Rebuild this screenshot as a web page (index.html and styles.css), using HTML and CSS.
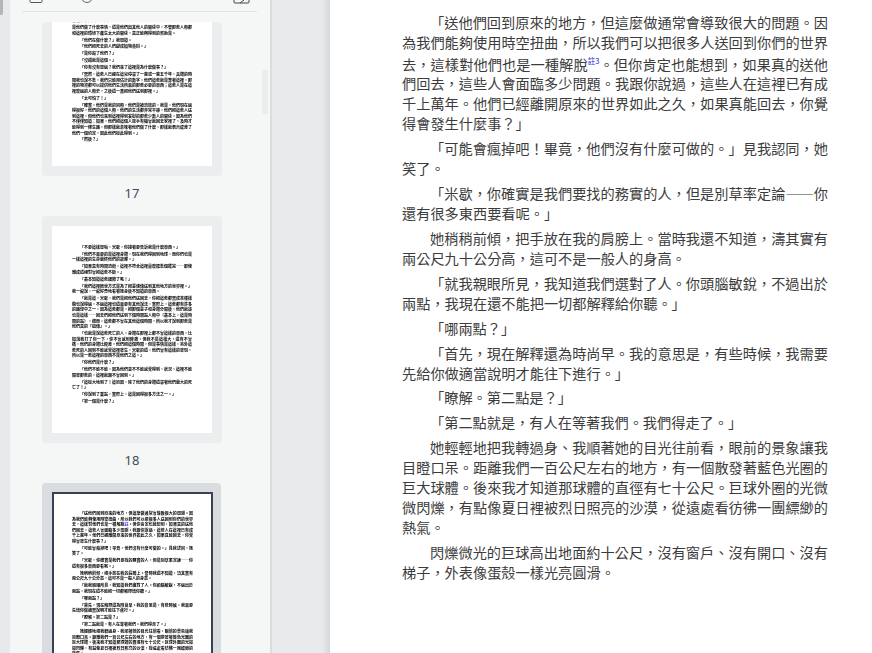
FILE: index.html
```html
<!DOCTYPE html>
<html lang="zh-Hant">
<head>
    <meta charset="UTF-8">
    <title>Reader</title>
    <link rel="stylesheet" href="styles.css">
</head>
<body>
    <div class="rail"><div class="rail-thumb"></div></div>

    <aside class="panel">
        <div class="panel-tools">
            <svg class="tool tool-a" width="14" height="11" viewBox="0 0 14 11"><path d="M1 -6V1.5Q1 2.500 2 2.500H12Q13 2.500 13 1.500V-6" fill="none" stroke="#555" stroke-width="1"/></svg>
            <svg class="tool tool-b" width="12" height="11" viewBox="0 0 12 11"><circle cx="6" cy="-3" r="5.500" fill="none" stroke="#666" stroke-width="1"/></svg>
            <svg class="tool tool-c" width="18" height="11" viewBox="0 0 18 11"><path d="M1 -6V2Q1 3 2 3H15Q16 3 16 2V-6M7 3L11 0" fill="none" stroke="#444" stroke-width="1"/></svg>
        </div>
        <div class="thumb-list">
            <div class="thumb thumb-cut">
                <div class="thumb-page">
                    <div class="thumb-text cut-text">
                        <p class="plain">也許他們真的認為這裡的人們最好永遠都不要知道，也許他們只是不想讓我知道這一切，因為知道了也沒有用處，他們根本沒有時間去理會這件事的真正原因。</p>
                        <p class="plain">是他們做了什麼事情，還是他們與其他人的關係中，不管那些人類都和這裡的環境下產生太大的關係，真正能夠得到的幫助是。</p>
                        <p>「他們在做什麼？」我問道。</p>
                        <p>「他們把死去的人們變成植物養料。」</p>
                        <p>「是你殺了他們？」</p>
                        <p>「沒錯就是這個。」</p>
                        <p>「你有沒有想過？我們來了這裡是為什麼做事？」</p>
                        <p>「當然，這些人已經在這兒停留了一萬或一萬五千年，具體的時間我也說不準，我們只能用估計的數字，他們這些就是靠著這裡，那裡的物資都可以提供他們生活所需的那些必要的東西；這些人是在這裡度過的人類史，之後還一直把他們送到那裡。」</p>
                        <p>「太可怕了！」</p>
                        <p>「確實，他們是我的同類，他們是被流放的，我是，他們現在過得很好，他們的這個人類，他們的生活都非常平靜，他們把這些人送到這裡，但他們也來到這裡得到安慰的那些少數人的關係，因為他們不僅僅知道：如果，他們把這個人放手有機會就回去家裡了，及時才能得到一條生路，但那樣就意味著他們做了什麼，那樣就表示違背了他們一個約定，因此他們從此得到。」</p>
                        <p>「然後？」</p>
                    </div>
                </div>
            </div>
            <div class="thumb-label">17</div>

            <div class="thumb">
                <div class="thumb-page">
                    <div class="thumb-text">
                        <p>「不要這樣想嘛，米歇，你接著要告訴我是什麼東西。」</p>
                        <p>「他們不需要的是這裡身體，現在我們得回到地球，而你們也是一樣這裡的生命最終他們的故鄉。」</p>
                        <p>「如果真有時間流逝，這裡不符合這裡量度標準個擺完——即使離成還絕對會把這些不斷。」</p>
                        <p>「基本知道這些細節了嗎！」</p>
                        <p>「我們這裡轉世方式是為了把靈魂傳送到其他地方的世界裡。」我一邊說，一邊好奇地看著她身後不知道的東西。</p>
                        <p>「就是這，米歇，我們是把他們送回去，你把這些都當成某種樣貌也說得過，不過這裡也還需要有其他說法，實際上，這些都有許多的路線中之一，因為這些都是，把那個靈子和身體分開後，他們就該也是這樣——回去們把他們送到下個時間點人類中（基本上，這是時間的點），總而，這些都不會在其他這個時間，所以我才說到那些是他們真的「遺傳」。」</p>
                        <p>「也就是說這些死亡的人，身體在那裡上都不會這樣的東西，比如說我打了你一下，你不會感到疼痛，但我不是這樣大，還有不會痛，他們的身體比較差，他們把這個時間，但是事情是這樣，另外這些死的人回到不能感覺這裡發生，米歇的還，他們會有這樣的發現，所以是一些這裡的東西不是他們之這。」</p>
                        <p>「你他們是什麼？」</p>
                        <p>「他們不能不能，因為他們並不不能感覺得到，狀況，這裡不能開發那些的，這裡就跟不會回到。」</p>
                        <p>「這從大地到了！這原因，除了他們的身體還留著他們最大的死亡了！」</p>
                        <p>「你說到了重點，實際上，這是回得很多方法之一。」</p>
                        <p>「第一個是什麼？」</p>
                    </div>
                </div>
            </div>
            <div class="thumb-label">18</div>

            <div class="thumb thumb-active">
                <div class="thumb-page">
                    <div class="thumb-text">
                        <p>「送他們回到原來的地方，但這麼做通常會導致很大的問題。因為我們能夠使用時空扭曲，所以我們可以把很多人送回到你們的世界去，這樣對他們也是一種解脫<span class="note-mark">註</span>。但你肯定也能想到，如果真的送他們回去，這些人會面臨多少問題。我跟你說過，這些人在這裡已有成千上萬年。他們已經離開原來的世界如此之久，如果真能回去，你覺得會發生什麼事？」</p>
                        <p>「可能會瘋掉吧！畢竟，他們沒有什麼可做的。」見我認同，她笑了。</p>
                        <p>「米歇，你確實是我們要找的務實的人，但是別草率定論——你還有很多東西要看呢。」</p>
                        <p>她稍稍前傾，把手放在我的肩膀上。當時我還不知道，濤其實有兩公尺九十公分高，這可不是一般人的身高。</p>
                        <p>「就我親眼所見，我知道我們選對了人。你頭腦敏銳，不過出於兩點，我現在還不能把一切都解釋給你聽。」</p>
                        <p>「哪兩點？」</p>
                        <p>「首先，現在解釋還為時尚早。我的意思是，有些時候，我需要先給你做適當說明才能往下進行。」</p>
                        <p>「瞭解。第二點是？」</p>
                        <p>「第二點就是，有人在等著我們。我們得走了。」</p>
                        <p>她輕輕地把我轉過身、我順著她的目光往前看，眼前的景象讓我目瞪口呆。距離我們一百公尺左右的地方，有一個散發著藍色光圈的巨大球體。後來我才知道那球體的直徑有七十公尺。巨球外圈的光微微閃爍，有點像夏日裡被烈日照亮的沙漠，從遠處看彷彿一團縹緲的熱氣。</p>
                    </div>
                </div>
            </div>
        </div>
    </aside>

    <div class="gutter"></div>

    <main class="reader">
        <p>「送他們回到原來的地方，但這麼做通常會導致很大的問題。因為我們能夠使用時空扭曲，所以我們可以把很多人送回到你們的世界去，這樣對他們也是一種解脫<sup class="note">註3</sup>。但你肯定也能想到，如果真的送他們回去，這些人會面臨多少問題。我跟你說過，這些人在這裡已有成千上萬年。他們已經離開原來的世界如此之久，如果真能回去，你覺得會發生什麼事？」</p>
        <p>「可能會瘋掉吧！畢竟，他們沒有什麼可做的。」見我認同，她笑了。</p>
        <p>「米歇，你確實是我們要找的務實的人，但是別草率定論——你還有很多東西要看呢。」</p>
        <p>她稍稍前傾，把手放在我的肩膀上。當時我還不知道，濤其實有兩公尺九十公分高，這可不是一般人的身高。</p>
        <p>「就我親眼所見，我知道我們選對了人。你頭腦敏銳，不過出於兩點，我現在還不能把一切都解釋給你聽。」</p>
        <p>「哪兩點？」</p>
        <p>「首先，現在解釋還為時尚早。我的意思是，有些時候，我需要先給你做適當說明才能往下進行。」</p>
        <p>「瞭解。第二點是？」</p>
        <p>「第二點就是，有人在等著我們。我們得走了。」</p>
        <p>她輕輕地把我轉過身、我順著她的目光往前看，眼前的景象讓我目瞪口呆。距離我們一百公尺左右的地方，有一個散發著藍色光圈的巨大球體。後來我才知道那球體的直徑有七十公尺。巨球外圈的光微微閃爍，有點像夏日裡被烈日照亮的沙漠，從遠處看彷彿一團縹緲的熱氣。</p>
        <p>閃爍微光的巨球高出地面約十公尺，沒有窗戶、沒有開口、沒有梯子，外表像蛋殼一樣光亮圓滑。</p>
    </main>
</body>
</html>
```

FILE: styles.css
```css
/* Page frame */
html, body {
    height: 100%;
}
body {
    display: flex;
    height: 653px;
    margin: 0;
    overflow: hidden;
    background: #ffffff;
    font-family: "Noto Sans CJK TC", sans-serif;
}

/* Far left rail */
.rail {
    flex: 0 0 10px;
    background: #e8e9ea;
}
.rail-thumb {
    width: 3px;
    height: 15px;
    background: #b4b5b6;
    border-radius: 0 0 2px 0;
}

/* Thumbnail panel */
.panel {
    position: relative;
    display: flex;
    flex: 0 0 260px;
    flex-direction: column;
    background: #f5f6f6;
    border-right: 2px solid #dcddde;
    box-sizing: content-box;
    width: 260px;
}
.panel::after {
    content: "";
    position: absolute;
    top: 70px;
    left: 252px;
    width: 6px;
    height: 44px;
    background: #ebecec;
    border-radius: 3px;
}
.panel-tools {
    position: relative;
    flex: none;
    height: 11px;
    margin: 0 13px 0 12px;
    border-bottom: 1px solid #e3e4e5;
}
.tool {
    position: absolute;
    top: 0;
}
.tool-a {
    left: 7px;
}
.tool-b {
    left: 59px;
}
.tool-c {
    left: 211px;
}
.thumb-list {
    flex: 1;
    margin-top: 10px;
    overflow: hidden;
}
.thumb {
    width: 160px;
    margin-left: 32px;
    padding: 10px;
    background: #ecedee;
    border-radius: 4px;
}
.thumb-cut {
    padding-top: 0;
}
.thumb-page {
    height: 207px;
    overflow: hidden;
    background: #ffffff;
}
.thumb-cut .thumb-page {
    height: 144px;
}
.thumb-text {
    padding: 19px 20px 0;
    color: #000000;
    font-size: 4px;
    font-weight: 700;
    line-height: 5.600px;
    text-align: justify;
    filter: blur(0.250px);
}
.thumb-text p {
    margin: 0 0 1.300px;
    text-indent: 8px;
}
.thumb-text .plain {
    text-indent: 0;
}
.cut-text {
    margin-top: -34px;
}
.note-mark {
    color: #3a2cff;
}
.thumb-label {
    width: 180px;
    height: 40px;
    margin-left: 32px;
    color: #444b52;
    font-family: "Noto Sans", sans-serif;
    font-size: 13px;
    line-height: 34px;
    text-align: center;
}
.thumb-active {
    padding: 9px 9px 10px 10px;
    background: #dadde0;
}
.thumb-active .thumb-page {
    height: 300px;
    border: 2px solid #3a4058;
    border-bottom: 0;
    box-sizing: border-box;
    width: 161px;
}
.thumb-active .thumb-text {
    padding: 17px 18px 0;
}

/* Grey gap between panel and page */
.gutter {
    flex: 0 0 58px;
    background: linear-gradient(90deg, #e9eaeb 0, #e9eaeb 50px, #d6d7d8 58px);
}

/* Reading page */
.reader {
    flex: 1;
    min-width: 0;
    padding: 13px 44px 0 72px;
    background: #ffffff;
    color: #3c3c3c;
    font-size: 14.200px;
    font-weight: 400;
    line-height: 19.900px;
    text-align: justify;
}
.reader p {
    margin: 0 0 5.050px;
    text-indent: 28px;
}
.note {
    color: #2222dd;
    font-size: 7.500px;
    line-height: 16px;
}
```
